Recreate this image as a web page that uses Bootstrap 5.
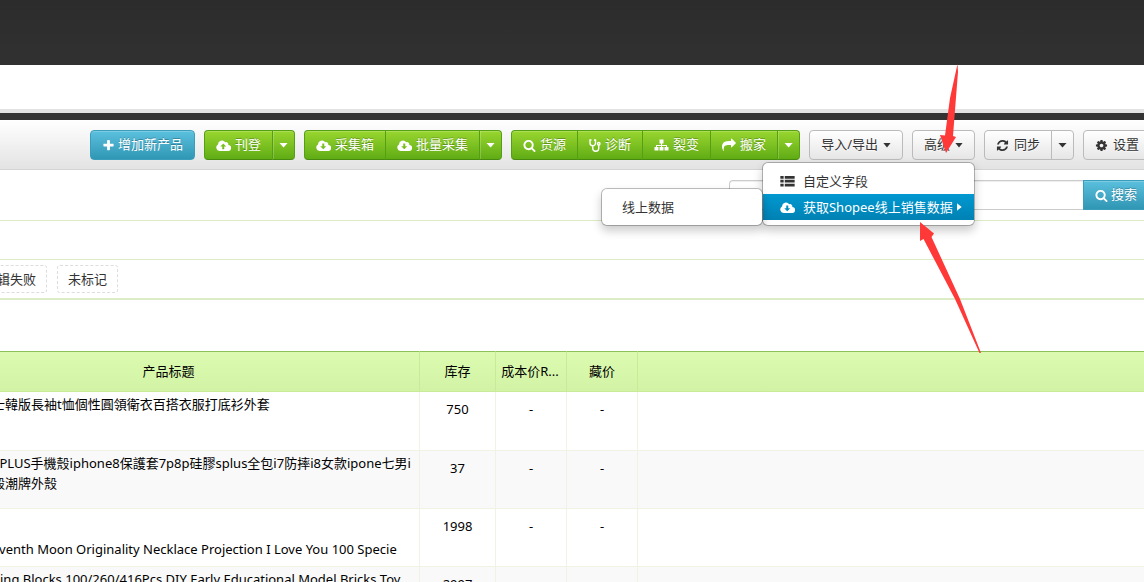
<!DOCTYPE html>
<html lang="zh-CN">
<head>
<meta charset="utf-8">
<meta name="viewport" content="width=device-width, initial-scale=1">
<title>产品管理</title>
<link href="https://cdn.jsdelivr.net/npm/bootstrap@5.3.0/dist/css/bootstrap.min.css" rel="stylesheet">
<style>
body{font:13px/20px "Noto Sans","Noto Sans CJK SC",sans-serif;color:#333;background:#fff;height:100vh;overflow:hidden;position:relative}
.topbar{height:65px;background:linear-gradient(#2c2c2c,#313131)}
.subbar{height:48px;border-bottom:4px solid #e2e2e2}
.strip{height:7px;background:#333}
.toolbar{height:50px;padding:10px 0 0 90px;gap:9px;background:linear-gradient(#fff,#e3e3e3);border-bottom:1px solid #d4d4d4}
.toolbar>*{flex:none}
.toolbar .btn,.search-form .btn{font-size:13px;line-height:20px;height:30px;padding:3px 11px 5px;border-radius:4px;display:inline-flex;align-items:center;gap:4px;white-space:nowrap}
.toolbar .btn-blue,.search-form .btn-blue{gap:3px}
.toolbar .btn-plain{gap:5px}
.btn-blue,.btn-blue:hover{color:#fff;background:linear-gradient(#5bc0de,#2f96b4);border:1px solid #3a9dbb;text-shadow:0 -1px 0 rgba(0,0,0,.25);box-shadow:inset 0 1px 0 rgba(255,255,255,.2)}
.btn-green,.btn-green:hover{color:#fff;background:linear-gradient(#99d62f,#60ac15);border:1px solid #559f14;border-color:#559f14 #559f14 #488a10;text-shadow:0 -1px 0 rgba(0,0,0,.25);box-shadow:inset 0 1px 0 rgba(255,255,255,.2)}
.btn-plain,.btn-plain:hover{color:#333;background:linear-gradient(#fff,#e6e6e6);border:1px solid #bbb;text-shadow:0 1px 1px rgba(255,255,255,.75)}
.toolbar .btn-green+.btn-green.tri-only{box-shadow:inset 1px 0 0 rgba(255,255,255,.2),inset 0 1px 0 rgba(255,255,255,.2)}
.toolbar .btn.tri-only{padding:3px 6px 5px}
.btn-group>.btn:not(:last-child){border-top-right-radius:0;border-bottom-right-radius:0}
.btn-group>.btn:not(:first-child){border-top-left-radius:0;border-bottom-left-radius:0}
.tri,.tri-right{flex:none;background:currentColor}
.tri{width:8px;height:5px;margin-top:2px;clip-path:polygon(0 0,100% 0,50% 100%)}
.toolbar .tri-only .tri{width:9px}
.tri-right{width:5px;height:8px;clip-path:polygon(0 0,100% 50%,0 100%)}
.ico{fill:currentColor;flex:none}
.toolbar .btn .ico,.search-form .ico{margin-top:2px}
.drop-box{position:absolute;z-index:20;background:#fff;border:1px solid rgba(0,0,0,.25);background-clip:padding-box;border-radius:6px;box-shadow:0 5px 10px rgba(0,0,0,.2);padding:5px 0;margin:0;list-style:none}
.main-drop{top:calc(100% + 2px);right:0;width:213px}
.side-drop{top:-6px;right:100%;width:162px}
.drop-box li{position:relative}
.drop-link{display:flex;align-items:center;height:26px;padding:0 8px 0 17px;color:#333;text-decoration:none;white-space:nowrap}
.drop-link .ico{margin-right:8px}
.side-drop .drop-link{padding-left:20px}
.drop-link.chosen{color:#fff;background:linear-gradient(#0099d1,#0081b3)}
.search-bar{height:51px;padding-top:10px;border-bottom:1px solid #dbecc6}
.search-form{width:420px;margin-right:-5px}
.search-form .form-control{height:30px;border:1px solid #ccc;border-right:0;border-radius:4px 0 0 4px;font-size:13px;padding:4px 8px;box-shadow:inset 0 1px 1px rgba(0,0,0,.075)}
.search-form .btn{border-radius:0}
.filter-gap{height:39px;border-bottom:1px solid #dbecc6}
.tag-bar{height:40px;padding-top:5px;gap:10px;margin-left:-27px;border-bottom:2px solid #dbecc6}
.tag-link{height:28px;line-height:26px;padding:0 10px;border:1px dashed #ddd;border-radius:3px;color:#333;text-decoration:none;white-space:nowrap}
.goods{margin-top:51px;table-layout:fixed;width:100%;color:#000;border-collapse:separate;border-spacing:0}
.goods th{height:41px;font-weight:400;text-align:center;padding:0 4px 2px;background:linear-gradient(#dcfbb0,#d2f3a6);border-top:1px solid #8dc057;border-right:1px solid #c8eb98;border-bottom:1px solid #c8eb98;white-space:nowrap}
.goods th.cost-head{padding-left:2px}
.goods td{height:58px;padding:7px 0 0;text-align:center;vertical-align:top;border-right:1px solid #eef3e4;border-bottom:1px solid #eef3e4}
.goods tbody tr:first-child td{height:59px}
.goods th:last-child,.goods td:last-child{border-right:0}
.goods .name-cell{padding:2px 0 7px;text-align:left;white-space:nowrap}
.goods tbody tr:nth-child(even){background:#f9f9f9}
.name-cell div{margin-left:-8px}
.name-head{padding-right:82px}
.c-name{width:420px}.c-stock{width:76px}.c-num{width:71px}
.arrows{position:absolute;left:900px;top:60px;z-index:30;pointer-events:none}
</style>
</head>
<body>
<svg width="0" height="0" class="position-absolute" aria-hidden="true">
<symbol id="i-plus" viewBox="0 0 1792 1792"><path d="M1600 736v192q0 40-28 68t-68 28h-416v416q0 40-28 68t-68 28h-192q-40 0-68-28t-28-68v-416h-416q-40 0-68-28t-28-68v-192q0-40 28-68t68-28h416v-416q0-40 28-68t68-28h192q40 0 68 28t28 68v416h416q40 0 68 28t28 68z"/></symbol>
<symbol id="i-up" viewBox="0 0 30 22"><path fill-rule="evenodd" d="M7 22A7 7 0 0 1 4 9A8 8 0 0 1 18.500 4.500A4.500 4.500 0 0 1 24.500 10A6 6 0 0 1 24 22ZM14.500 7L8.500 13H12.500V18.500H16.500V13H20.500Z"/></symbol>
<symbol id="i-down" viewBox="0 0 30 22"><path fill-rule="evenodd" d="M7 22A7 7 0 0 1 4 9A8 8 0 0 1 18.500 4.500A4.500 4.500 0 0 1 24.500 10A6 6 0 0 1 24 22ZM14.500 18.500L8.500 12.500H12.500V7H16.500V12.500H20.500Z"/></symbol>
<symbol id="i-search" viewBox="0 0 1792 1792"><path d="M1216 832q0-185-131.500-316.500t-316.500-131.500-316.500 131.500-131.500 316.500 131.500 316.500 316.500 131.500 316.500-131.500 131.500-316.500zm512 832q0 52-38 90t-90 38q-54 0-90-38l-343-342q-179 124-399 124-143 0-273.500-55.500t-225-150-150-225-55.500-273.500 55.500-273.500 150-225 225-150 273.500-55.500 273.500 55.500 225 150 150 225 55.500 273.500q0 220-124 399l343 343q37 37 37 90z"/></symbol>
<symbol id="i-steth" viewBox="0 0 24 26"><path fill="none" stroke="currentColor" stroke-width="2.800" d="M5 2H2V8A5.500 5.500 0 0 0 13 8V2H10M7.500 14V18.500A6 6 0 0 0 19.500 18.500V12"/><circle cx="19.500" cy="9.500" r="2.500" fill="none" stroke="currentColor" stroke-width="2.800"/></symbol>
<symbol id="i-tree" viewBox="0 0 28 24"><path d="M10 1H18V9H15V12H25V16H28V23H20V16H23V14H15V16H18V23H10V16H13V14H5V16H8V23H0V16H3V12H13V9H10Z"/></symbol>
<symbol id="i-share" viewBox="0 0 1792 1792"><path d="M1792 640q0 26-19 45l-512 512q-19 19-45 19t-45-19-19-45v-256h-224q-98 0-175.500 6t-154 21.500-133 42.500-105.500 69.500-80 101-48.500 138.500-17.500 181q0 55 5 123 0 6 2.500 23.500t2.500 26.500q0 15-8.500 25t-23.500 10q-16 0-28-17-7-9-13-22t-13.500-30-10.500-24q-127-285-127-451 0-199 53-333 162-403 875-403h224v-256q0-26 19-45t45-19 45 19l512 512q19 19 19 45z"/></symbol>
<symbol id="i-refresh" viewBox="0 0 1792 1792"><path d="M1639 1056q0 5-1 7-64 268-268 434.500t-478 166.500q-146 0-282.500-55t-243.500-157l-129 129q-19 19-45 19t-45-19-19-45v-448q0-26 19-45t45-19h448q26 0 45 19t19 45-19 45l-137 137q71 66 161 102t187 36q134 0 250-65t186-179q11-17 53-117 8-23 30-23h192q13 0 22.500 9.500t9.500 22.500zm25-800v448q0 26-19 45t-45 19h-448q-26 0-45-19t-19-45 19-45l138-138q-148-137-349-137-134 0-250 65t-186 179q-11 17-53 117-8 23-30 23h-199q-13 0-22.500-9.500t-9.500-22.500v-7q65-268 270-434.500t480-166.500q146 0 284 55.500t245 156.500l130-129q19-19 45-19t45 19 19 45z"/></symbol>
<symbol id="i-cog" viewBox="0 0 1792 1792"><path d="M1152 896q0-106-75-181t-181-75-181 75-75 181 75 181 181 75 181-75 75-181zm512-109v222q0 12-8 23t-20 13l-185 28q-19 54-39 91 35 50 107 138 10 12 10 25t-9 23q-27 37-99 108t-94 71q-12 0-26-9l-138-108q-44 23-91 38-16 136-29 186-7 28-36 28h-222q-14 0-24.500-8.500t-11.500-21.500l-28-184q-49-16-90-37l-141 107q-10 9-25 9-14 0-25-11-126-114-165-168-7-10-7-23 0-12 8-23 15-21 51-66.500t54-70.500q-27-50-41-99l-183-27q-13-2-21-12.500t-8-23.500v-222q0-12 8-23t19-13l186-28q14-46 39-92-40-57-107-138-10-12-10-24 0-10 9-23 26-36 98.500-107.500t94.500-71.500q13 0 26 10l138 107q44-23 91-38 16-136 29-186 7-28 36-28h222q14 0 24.500 8.500t11.500 21.500l28 184q49 16 90 37l142-107q9-9 24-9 13 0 25 10 129 119 165 170 7 8 7 22 0 12-8 23-15 21-51 66.500t-54 70.500q26 50 41 98l183 28q13 2 21 12.500t8 23.500z"/></symbol>
<symbol id="i-list" viewBox="0 0 26 20"><path d="M0 0H6V5H0ZM8 0H26V5H8ZM0 7H6V12H0ZM8 7H26V12H8ZM0 14H6V19H0ZM8 14H26V19H8Z"/></symbol>
</svg>

<header>
  <div class="topbar"></div>
  <div class="subbar"></div>
  <div class="strip"></div>
</header>

<div class="toolbar d-flex align-items-start" role="toolbar" aria-label="产品操作">
  <button type="button" class="btn btn-blue"><svg class="ico" width="13" height="13"><use href="#i-plus"/></svg>增加新产品</button>
  <div class="btn-group">
    <button type="button" class="btn btn-green"><svg class="ico" width="15" height="11"><use href="#i-up"/></svg>刊登</button>
    <button type="button" class="btn btn-green tri-only" aria-label="刊登选项"><span class="tri"></span></button>
  </div>
  <div class="btn-group">
    <button type="button" class="btn btn-green"><svg class="ico" width="15" height="11"><use href="#i-down"/></svg>采集箱</button>
    <button type="button" class="btn btn-green"><svg class="ico" width="15" height="11"><use href="#i-down"/></svg>批量采集</button>
    <button type="button" class="btn btn-green tri-only" aria-label="采集选项"><span class="tri"></span></button>
  </div>
  <div class="btn-group">
    <button type="button" class="btn btn-green"><svg class="ico" width="13" height="13"><use href="#i-search"/></svg>货源</button>
    <button type="button" class="btn btn-green"><svg class="ico" width="12" height="13"><use href="#i-steth"/></svg>诊断</button>
    <button type="button" class="btn btn-green"><svg class="ico" width="15" height="12"><use href="#i-tree"/></svg>裂变</button>
    <button type="button" class="btn btn-green"><svg class="ico" width="14" height="14"><use href="#i-share"/></svg>搬家</button>
    <button type="button" class="btn btn-green tri-only" aria-label="搬家选项"><span class="tri"></span></button>
  </div>
  <button type="button" class="btn btn-plain">导入/导出<span class="tri"></span></button>
  <div class="position-relative">
    <button type="button" class="btn btn-plain" aria-expanded="true">高级<span class="tri"></span></button>
    <ul class="drop-box main-drop">
      <li><a class="drop-link" href="#"><svg class="ico" width="15" height="11"><use href="#i-list"/></svg>自定义字段</a></li>
      <li>
        <a class="drop-link chosen" href="#"><svg class="ico" width="15" height="11"><use href="#i-down"/></svg>获取Shopee线上销售数据<span class="tri-right ms-1"></span></a>
        <ul class="drop-box side-drop"><li><a class="drop-link" href="#">线上数据</a></li></ul>
      </li>
    </ul>
  </div>
  <div class="btn-group">
    <button type="button" class="btn btn-plain"><svg class="ico" width="13" height="13"><use href="#i-refresh"/></svg>同步</button>
    <button type="button" class="btn btn-plain tri-only" aria-label="同步选项"><span class="tri"></span></button>
  </div>
  <button type="button" class="btn btn-plain"><svg class="ico" width="13" height="13"><use href="#i-cog"/></svg>设置</button>
</div>

<main>
  <div class="search-bar">
    <form class="search-form d-flex ms-auto">
      <input type="search" class="form-control" aria-label="搜索">
      <button type="button" class="btn btn-blue"><svg class="ico" width="13" height="13"><use href="#i-search"/></svg>搜索</button>
    </form>
  </div>
  <div class="filter-gap"></div>
  <nav class="tag-bar d-flex" aria-label="标记">
    <a class="tag-link" href="#">编辑失败</a>
    <a class="tag-link" href="#">未标记</a>
  </nav>
  <table class="goods">
    <colgroup><col class="c-name"><col class="c-stock"><col class="c-num"><col class="c-num"><col></colgroup>
    <thead><tr><th><span class="name-head">产品标题</span></th><th>库存</th><th class="cost-head">成本价R...</th><th>藏价</th><th></th></tr></thead>
    <tbody>
      <tr><td class="name-cell"><div>士韓版長袖t恤個性圓領衛衣百搭衣服打底衫外套</div></td><td>750</td><td>-</td><td>-</td><td></td></tr>
      <tr><td class="name-cell"><div>8PLUS手機殼iphone8保護套7p8p硅膠splus全包i7防摔i8女款ipone七男i<br>殼潮牌外殼</div></td><td>37</td><td>-</td><td>-</td><td></td></tr>
      <tr><td class="name-cell align-bottom"><div>eventh Moon Originality Necklace Projection I Love You 100 Specie</div></td><td>1998</td><td>-</td><td>-</td><td></td></tr>
      <tr><td class="name-cell"><div>ding Blocks 100/260/416Pcs DIY Early Educational Model Bricks Toy</div></td><td>2997</td><td></td><td></td><td></td></tr>
    </tbody>
  </table>
</main>

<svg class="arrows" width="90" height="300" viewBox="0 0 90 300" fill="#ff3838" aria-hidden="true">
  <path d="M57.500 4L58 12L55 50L53 76L56 77L46 93L40 75L45 75.500L50 38Z"/>
  <path d="M20 162L34 173.500L31.500 177L60 239L81 293L79.500 293L55 239L23.500 179L20 181Z"/>
</svg>
<script src="https://cdn.jsdelivr.net/npm/bootstrap@5.3.0/dist/js/bootstrap.bundle.min.js"></script>
</body>
</html>
